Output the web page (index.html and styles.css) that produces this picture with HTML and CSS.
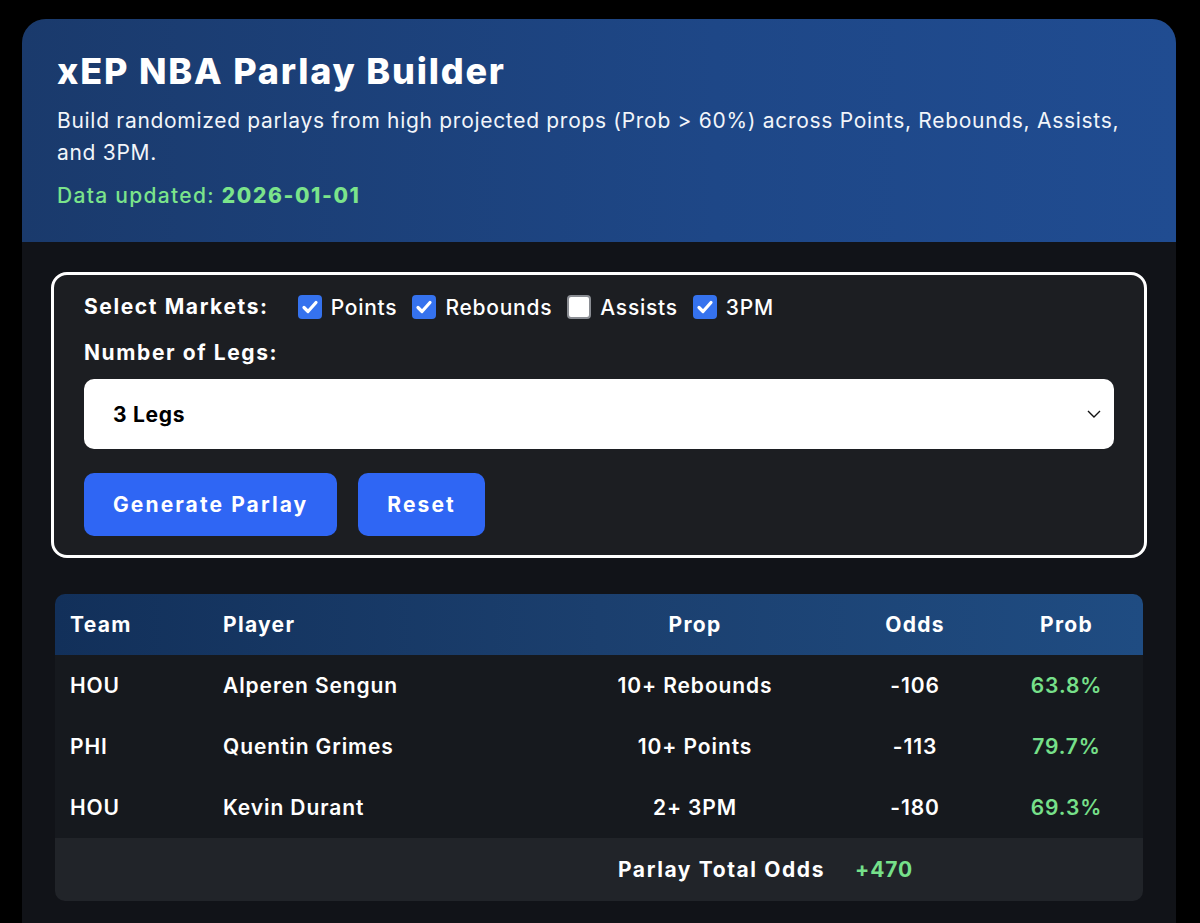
FILE: index.html
```html
<!DOCTYPE html>
<html lang="en">
<head>
<meta charset="utf-8">
<title>xEP NBA Parlay Builder</title>
<link rel="stylesheet" href="styles.css">
</head>
<body>
<div class="card">
  <header class="hero">
    <h1 class="title">xEP NBA Parlay Builder</h1>
    <p class="sub">Build randomized parlays from high projected props (Prob &gt; 60%) across Points, Rebounds, Assists, and 3PM.</p>
    <p class="updated">Data updated: <strong>2026-01-01</strong></p>
  </header>
  <main class="content">
    <section class="panel">
      <div class="markets">
        <span class="label">Select Markets:</span>
        <label class="opt"><span class="box on"><svg viewBox="0 0 24 24" width="24" height="24"><path d="M6 12.5l4 4 8-9" fill="none" stroke="#fff" stroke-width="3.2" stroke-linecap="round" stroke-linejoin="round"/></svg></span>Points</label>
        <label class="opt"><span class="box on"><svg viewBox="0 0 24 24" width="24" height="24"><path d="M6 12.5l4 4 8-9" fill="none" stroke="#fff" stroke-width="3.2" stroke-linecap="round" stroke-linejoin="round"/></svg></span>Rebounds</label>
        <label class="opt"><span class="box"></span>Assists</label>
        <label class="opt"><span class="box on"><svg viewBox="0 0 24 24" width="24" height="24"><path d="M6 12.5l4 4 8-9" fill="none" stroke="#fff" stroke-width="3.2" stroke-linecap="round" stroke-linejoin="round"/></svg></span>3PM</label>
      </div>
      <div class="label legs-label">Number of Legs:</div>
      <div class="select">
        <span class="select-value">3 Legs</span>
        <svg class="chev" viewBox="0 0 14 8" width="14" height="8"><path d="M1 1l6 6 6-6" fill="none" stroke="#111" stroke-width="1.4"/></svg>
      </div>
      <div class="actions">
        <button class="btn">Generate Parlay</button>
        <button class="btn">Reset</button>
      </div>
    </section>

    <table class="parlay">
      <thead>
        <tr>
          <th class="c-team">Team</th>
          <th class="c-player">Player</th>
          <th class="c-prop">Prop</th>
          <th class="c-odds">Odds</th>
          <th class="c-prob">Prob</th>
        </tr>
      </thead>
      <tbody>
        <tr>
          <td>HOU</td><td>Alperen Sengun</td><td class="ctr">10+ Rebounds</td><td class="ctr">-106</td><td class="ctr green">63.8%</td>
        </tr>
        <tr>
          <td>PHI</td><td>Quentin Grimes</td><td class="ctr">10+ Points</td><td class="ctr">-113</td><td class="ctr green">79.7%</td>
        </tr>
        <tr>
          <td>HOU</td><td>Kevin Durant</td><td class="ctr">2+ 3PM</td><td class="ctr">-180</td><td class="ctr green">69.3%</td>
        </tr>
      </tbody>
      <tfoot>
        <tr>
          <td colspan="3" class="total-label">Parlay Total Odds</td>
          <td class="total green">+470</td>
          <td></td>
        </tr>
      </tfoot>
    </table>
  </main>
</div>
</body>
</html>
```
FILE: styles.css
```css
* { box-sizing: border-box; }

html, body {
  margin: 0;
  background: #000;
  font-family: Inter, "Noto Sans", "DejaVu Sans", sans-serif;
  color: #fff;
}

.card {
  margin: 19px 24px 0 22px;
  border-radius: 24px 24px 0 0;
  overflow: hidden;
  background: #111318;
  min-height: 910px;
}

.hero {
  background: linear-gradient(90deg, #1a3a6c 0%, #1e4787 60%, #204c91 100%);
  padding: 32px 35px 30px 35px;
}

.title {
  margin: 0;
  font-size: 36px;
  line-height: 40px;
  font-weight: 800;
  letter-spacing: 1.8px;
}

.sub {
  margin: 14px 0 0;
  font-size: 21px;
  line-height: 32px;
  font-weight: 400;
  letter-spacing: 0.7px;
  color: #f2f5fa;
}

.updated {
  margin: 11px 0 0;
  font-size: 21px;
  line-height: 32px;
  font-weight: 500;
  letter-spacing: 1.3px;
  color: #7be48b;
}
.updated strong { font-weight: 800; letter-spacing: 1.6px; }

.content {
  padding: 30px 29px 40px;
}

.panel {
  border: 3px solid #fff;
  border-radius: 16px;
  background: #1c1e22;
  padding: 16px 30px 19px;
}

.markets {
  display: flex;
  align-items: center;
  height: 32px;
}

.label {
  font-size: 21px;
  line-height: 32px;
  font-weight: 700;
  letter-spacing: 1.6px;
}

.markets .label { margin-right: 29px; }

.opt {
  display: flex;
  align-items: center;
  gap: 9px;
  font-size: 21px;
  font-weight: 500;
  letter-spacing: 0.75px;
  margin-right: 15px;
}

.box {
  width: 24px;
  height: 24px;
  border-radius: 4px;
  background: #fff;
  border: 2px solid #8a8d93;
  display: inline-flex;
  flex: none;
}
.box.on {
  background: #3572ee;
  border: none;
}

.legs-label { margin-top: 14px; }

.select {
  position: relative;
  margin-top: 10px;
  height: 70px;
  background: #fff;
  border-radius: 10px;
  display: flex;
  align-items: center;
  padding: 0 29px;
  color: #000;
  font-size: 21px;
  font-weight: 700;
  letter-spacing: 0.7px;
}

.chev {
  position: absolute;
  right: 13px;
  top: 31px;
}

.actions {
  display: flex;
  gap: 21px;
  margin-top: 24px;
}

.btn {
  height: 63px;
  padding: 0 29px;
  border: none;
  border-radius: 10px;
  background: #2f66f4;
  color: #fff;
  font-family: inherit;
  font-size: 21px;
  font-weight: 700;
  letter-spacing: 2.1px;
}

.parlay {
  margin: 36px 4px 0;
  width: calc(100% - 8px);
  border-collapse: separate;
  border-spacing: 0;
  border-radius: 10px;
  overflow: hidden;
  table-layout: fixed;
  font-size: 21px;
}

.parlay thead tr {
  background: linear-gradient(90deg, #12305a 0%, #1b3f6e 50%, #1f4c82 100%);
}

.parlay th, .parlay td {
  height: 61px;
  padding: 0 15px;
  text-align: left;
  font-weight: 600;
  letter-spacing: 0.9px;
  white-space: nowrap;
}
.parlay th { font-weight: 700; letter-spacing: 1.3px; }

.c-team { width: 153px; }
.c-player { width: 342px; }
.c-prop { width: 290px; }
.c-odds { width: 150px; }
.c-prob { width: 153px; }

.parlay th.c-prop, .parlay th.c-odds, .parlay th.c-prob { text-align: center; }
.parlay td.ctr { text-align: center; }

.parlay tbody tr { background: #16191e; }
.parlay tfoot tr { background: #212429; }
.parlay tfoot td { height: 63px; }

.parlay td.total-label { text-align: right; font-weight: 700; letter-spacing: 1.6px; }
.parlay td.total { font-weight: 700; }

.green { color: #76e08a; }
```
